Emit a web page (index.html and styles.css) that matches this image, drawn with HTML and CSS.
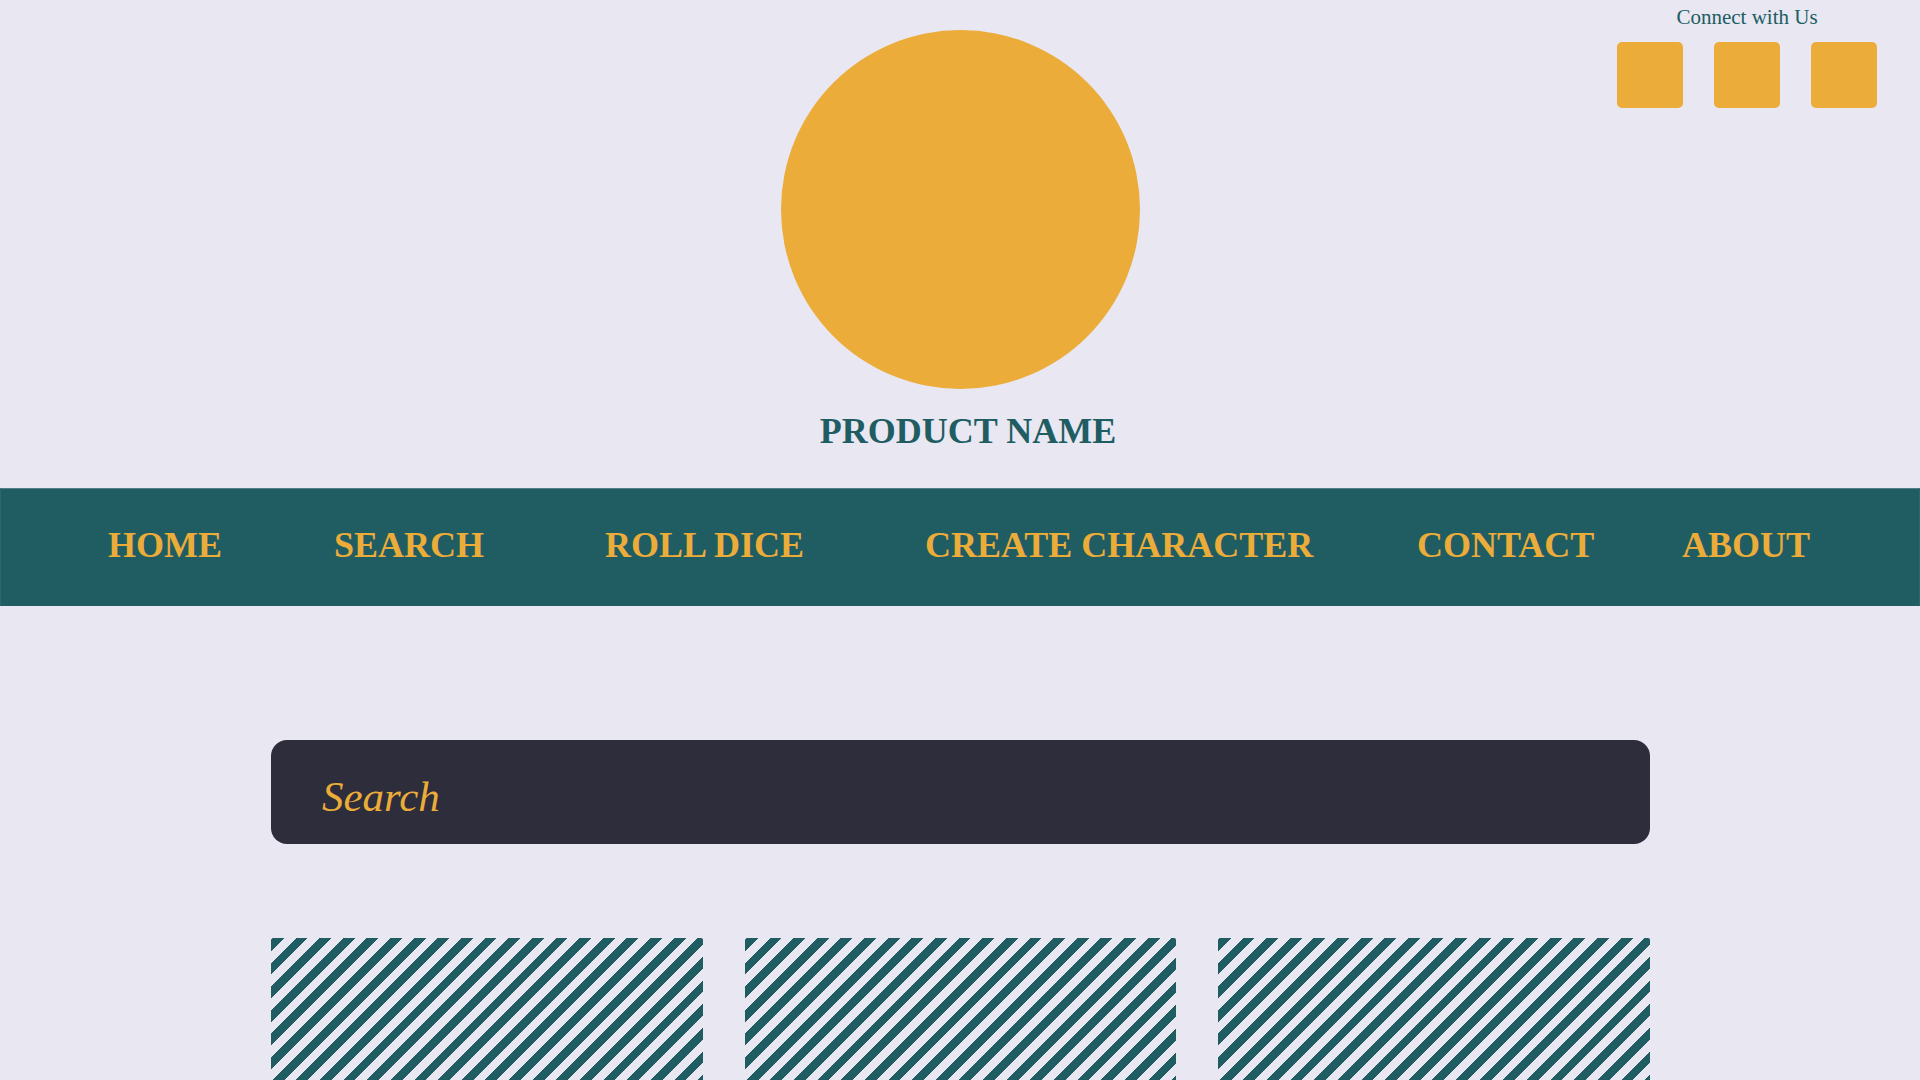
FILE: index.html
```html
<!DOCTYPE html>
<html lang="en">
<head>
  <meta charset="utf-8">
  <meta name="viewport" content="width=device-width, initial-scale=1">
  <title>Product Name</title>
  <link rel="stylesheet" href="styles.css">
</head>
<body>
  <header class="header">
    <div class="brand">
      <div class="logo"></div>
      <h1 class="title">PRODUCT NAME</h1>
    </div>
    <div class="connect">
      <p class="connect-label">Connect with Us</p>
      <div class="connect-links">
        <a class="connect-link" href="#" aria-label="Social link 1"></a>
        <a class="connect-link" href="#" aria-label="Social link 2"></a>
        <a class="connect-link" href="#" aria-label="Social link 3"></a>
      </div>
    </div>
  </header>
  <nav class="nav">
    <a class="nav-link" href="#">HOME</a>
    <a class="nav-link" href="#">SEARCH</a>
    <a class="nav-link" href="#">ROLL DICE</a>
    <a class="nav-link" href="#">CREATE CHARACTER</a>
    <a class="nav-link" href="#">CONTACT</a>
    <a class="nav-link" href="#">ABOUT</a>
  </nav>
  <main class="main">
    <input class="search" type="search" placeholder="Search" aria-label="Search">
    <div class="cards">
      <div class="card"></div>
      <div class="card"></div>
      <div class="card"></div>
    </div>
  </main>
</body>
</html>
```
FILE: styles.css
```css
:root {
  --teal: #205d62;
  --amber: #ebac3a;
  --lavender: #e8e7f2;
  --ink: #2e2d3b;
}

* {
  box-sizing: border-box;
}

body {
  display: flex;
  flex-direction: column;
  min-height: 100vh;
  margin: 0;
  background: var(--lavender);
  color: var(--teal);
  font-family: "Liberation Serif", "Times New Roman", serif;
}

.header {
  display: grid;
  grid-template-columns: 1fr auto 1fr;
}

.brand {
  grid-column: 2;
  display: flex;
  flex-direction: column;
  align-items: center;
  gap: 20px;
  padding: 30px 0 35px;
}

.logo {
  width: 359px;
  aspect-ratio: 1;
  border-radius: 50%;
  background: var(--amber);
}

.title {
  margin: 0;
  padding-left: 16px;
  font-size: 36px;
  line-height: 44px;
}

.connect {
  justify-self: end;
  padding: 5px 43px 0 0;
}

.connect-label {
  margin: 0 0 13px;
  font-size: 21px;
  line-height: 24px;
  text-align: center;
}

.connect-links {
  display: flex;
  gap: 31px;
}

.connect-link {
  width: 66px;
  height: 66px;
  border-radius: 5px;
  background: var(--amber);
}

.nav {
  display: grid;
  grid-template-columns: 226fr 271fr 320fr 492fr 265fr 237fr;
  padding: 34px 0 39px 107px;
  border: solid #2c676b;
  border-width: 1px 1px 0;
  border-top-color: #4f8085;
  background: var(--teal);
}

.nav-link {
  color: var(--amber);
  font-size: 36px;
  font-weight: bold;
  line-height: 44px;
  text-decoration: none;
  white-space: nowrap;
}

.main {
  flex: 1;
  display: flex;
  flex-direction: column;
  gap: 94px;
  padding: 134px 270px 0 271px;
}

.search {
  width: 100%;
  height: 104px;
  padding: 8px 51px 0;
  border: 0;
  border-radius: 16px;
  background: var(--ink);
  color: var(--amber);
  font: italic 43px "Liberation Serif", "Times New Roman", serif;
  appearance: none;
}

.search::placeholder {
  color: var(--amber);
  opacity: 1;
}

.cards {
  flex: 1;
  display: grid;
  grid-template-columns: repeat(3, 1fr);
  gap: 42px;
}

/* Diagonal stripes: seven repeats every 117px */
.card {
  --period: calc(117px / 7);
  min-height: 140px;
  border-radius: 2px 2px 0 0;
  background: repeating-linear-gradient(
    135deg,
    var(--teal) 1px calc(1px + var(--period) / 2),
    var(--lavender) calc(1px + var(--period) / 2) calc(1px + var(--period))
  );
}
```
